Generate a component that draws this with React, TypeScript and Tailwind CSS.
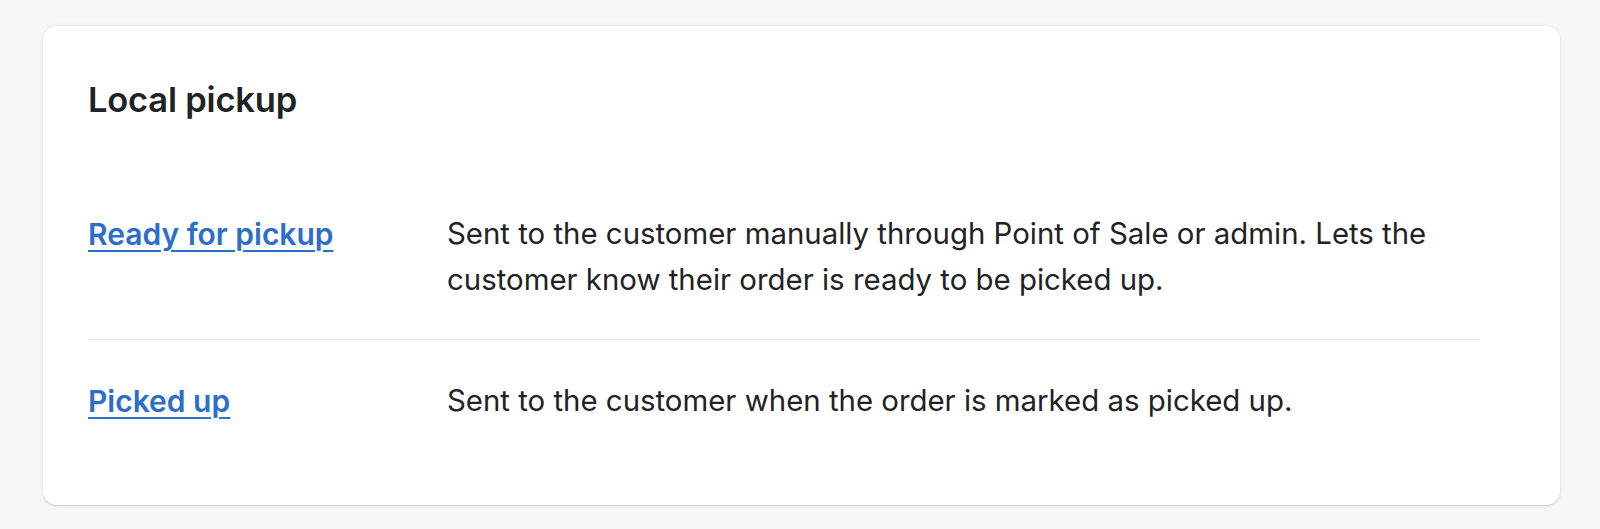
const rows = [
  {
    title: 'Ready for pickup',
    description:
      'Sent to the customer manually through Point of Sale or admin. Lets the customer know their order is ready to be picked up.',
  },
  {
    title: 'Picked up',
    description: 'Sent to the customer when the order is marked as picked up.',
  },
];

export default function App() {
  return (
    <div className="min-h-[529px] bg-[#f6f6f6] pt-[26px] pl-[43px] pr-[40px] font-['Inter',sans-serif] text-[#202223]">
      <div className="h-[479px] rounded-[14px] bg-white pt-[52px] pl-[45px] pr-[80px] shadow-[0_0_5px_rgba(23,24,24,0.05),0_1px_2px_rgba(0,0,0,0.15)]">
        <h2 className="text-[34.5px] leading-[44px] font-semibold tracking-[-0.2px]">Local pickup</h2>

        <div className="mt-[89px] divide-y divide-[#e4e5e7]">
          {rows.map((row) => (
            <div key={row.title} className="flex pt-[38px] pb-[36px] first:pt-0">
              <div className="w-[359px] shrink-0">
                <a
                  href="#"
                  className="text-[30px] leading-[46px] font-semibold text-[#2c6ecb] underline underline-offset-[5px] decoration-[2px]"
                >
                  {row.title}
                </a>
              </div>
              <p className="text-[29.4px] leading-[46px]">{row.description}</p>
            </div>
          ))}
        </div>
      </div>
    </div>
  );
}
